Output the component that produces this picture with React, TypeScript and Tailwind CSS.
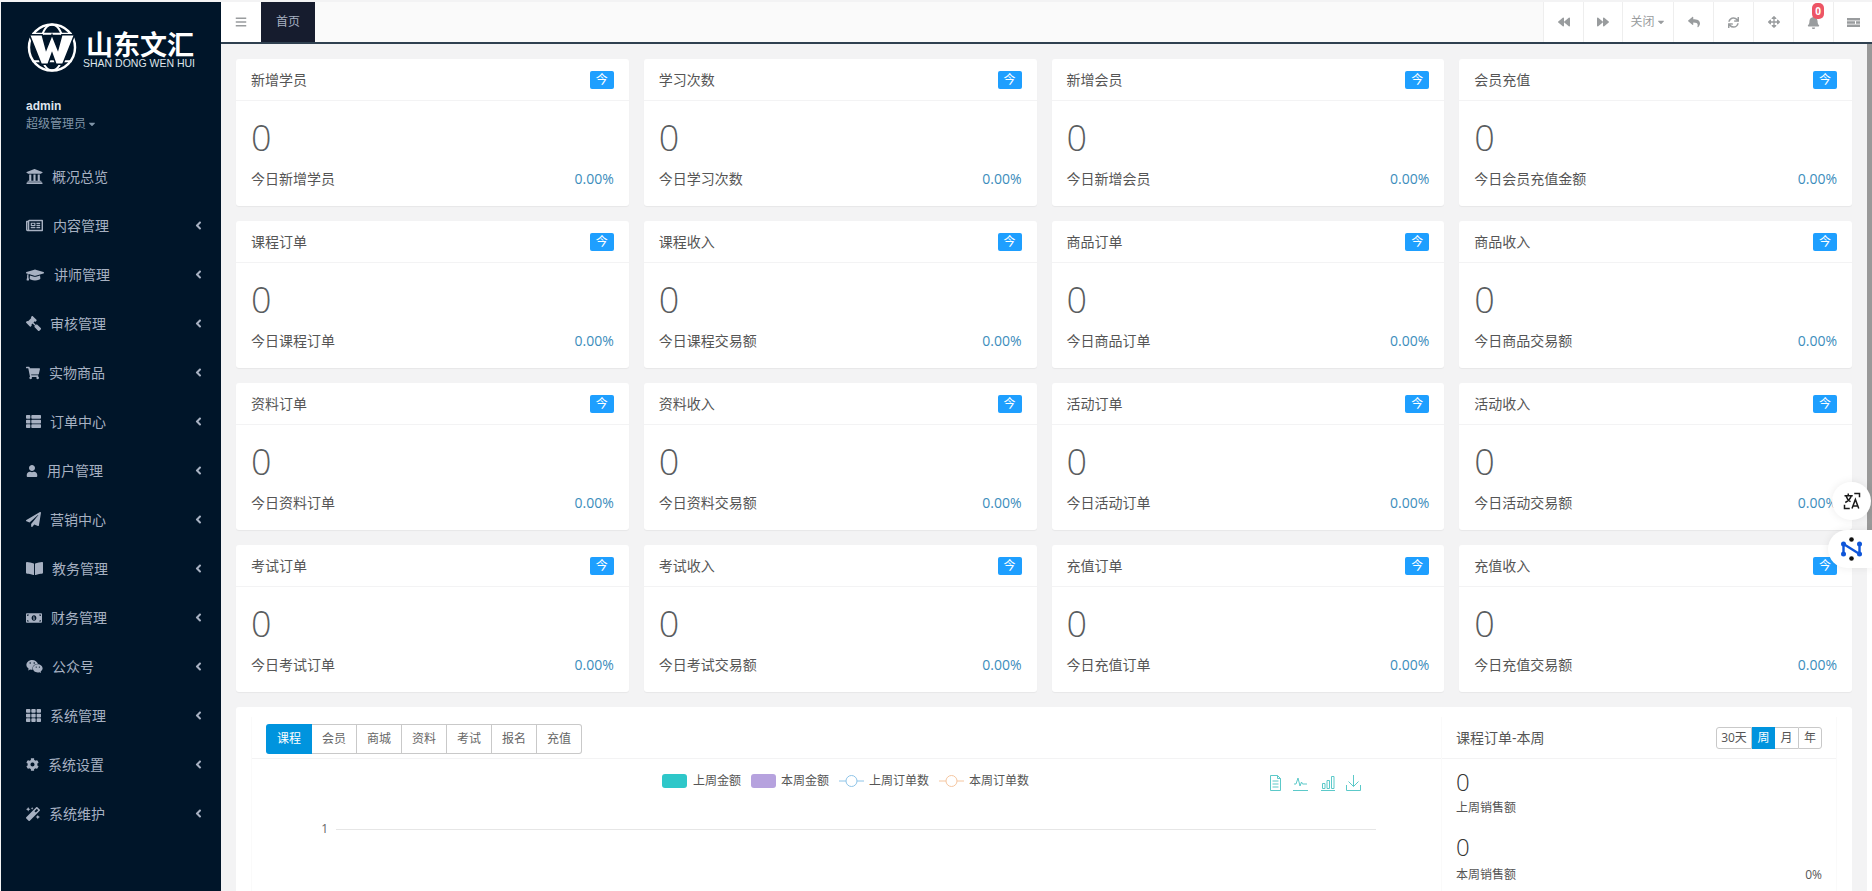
import React from 'react'
import {
  FaAngleLeft,
  FaArrowsAlt,
  FaBackward,
  FaBars,
  FaBell,
  FaBookOpen,
  FaCaretDown,
  FaCog,
  FaForward,
  FaGavel,
  FaGraduationCap,
  FaMagic,
  FaMoneyBillAlt,
  FaPaperPlane,
  FaRegNewspaper,
  FaReply,
  FaShoppingCart,
  FaSync,
  FaTh,
  FaThList,
  FaUniversity,
  FaUser,
  FaWeixin,
} from 'react-icons/fa'

const font = "font-['Open_Sans','Noto_Sans_CJK_SC',sans-serif]"

const menu = [
  { icon: FaUniversity, label: '概况总览', slot: 'w-[26px]', size: 17, arrow: false, flip: false },
  { icon: FaRegNewspaper, label: '内容管理', slot: 'w-[27px]', size: 17, arrow: true, flip: false },
  { icon: FaGraduationCap, label: '讲师管理', slot: 'w-[28px]', size: 18, arrow: true, flip: false },
  { icon: FaGavel, label: '审核管理', slot: 'w-[24px]', size: 15, arrow: true, flip: true },
  { icon: FaShoppingCart, label: '实物商品', slot: 'w-[23px]', size: 14, arrow: true, flip: false },
  { icon: FaThList, label: '订单中心', slot: 'w-[24px]', size: 15, arrow: true, flip: false },
  { icon: FaUser, label: '用户管理', slot: 'w-[21px]', size: 12, arrow: true, flip: false },
  { icon: FaPaperPlane, label: '营销中心', slot: 'w-[24px]', size: 15, arrow: true, flip: false },
  { icon: FaBookOpen, label: '教务管理', slot: 'w-[26px]', size: 17, arrow: true, flip: false },
  { icon: FaMoneyBillAlt, label: '财务管理', slot: 'w-[25px]', size: 16, arrow: true, flip: false },
  { icon: FaWeixin, label: '公众号', slot: 'w-[26px]', size: 17, arrow: true, flip: false },
  { icon: FaTh, label: '系统管理', slot: 'w-[24px]', size: 15, arrow: true, flip: false },
  { icon: FaCog, label: '系统设置', slot: 'w-[22px]', size: 13, arrow: true, flip: false },
  { icon: FaMagic, label: '系统维护', slot: 'w-[23px]', size: 14, arrow: true, flip: false },
]

const stats = [
  ['新增学员', '今日新增学员'],
  ['学习次数', '今日学习次数'],
  ['新增会员', '今日新增会员'],
  ['会员充值', '今日会员充值金额'],
  ['课程订单', '今日课程订单'],
  ['课程收入', '今日课程交易额'],
  ['商品订单', '今日商品订单'],
  ['商品收入', '今日商品交易额'],
  ['资料订单', '今日资料订单'],
  ['资料收入', '今日资料交易额'],
  ['活动订单', '今日活动订单'],
  ['活动收入', '今日活动交易额'],
  ['考试订单', '今日考试订单'],
  ['考试收入', '今日考试交易额'],
  ['充值订单', '今日充值订单'],
  ['充值收入', '今日充值交易额'],
]

const tabs = ['课程', '会员', '商城', '资料', '考试', '报名', '充值']

const Logo = () => (
  <svg width="50" height="49" viewBox="0 0 50 50" fill="none" className="shrink-0">
    <circle cx="25" cy="25" r="23.5" stroke="#fff" strokeWidth="2.500" />
    <ellipse cx="25" cy="25" rx="12" ry="23.500" stroke="#fff" strokeWidth="2" />
    <path d="M5 11h40M5 39h40" stroke="#fff" strokeWidth="2" />
    <path d="M2 12h13l4 15 6-15 6 15 4-15h13L36 42h-7l-4-11-4 11h-7z" fill="#fff" stroke="#001529" strokeWidth="1.500" />
  </svg>
)

const Sidebar = () => (
  <aside className="w-[220px] shrink-0 ml-px bg-[#001529] flex flex-col">
    <div className="h-[84px] pt-[21px] pl-[26px] flex items-start">
      <Logo />
      <div className="ml-[6px] flex flex-col">
        <span className="mt-[7px] ml-[3px] text-[27px] leading-[28px] text-white font-['Noto_Sans_CJK_SC',sans-serif] font-bold whitespace-nowrap">山东文汇</span>
        <span className="text-[10.500px] leading-[10px] text-[#dfe4ea] font-['Liberation_Sans',sans-serif] whitespace-nowrap">SHAN DONG WEN HUI</span>
      </div>
    </div>
    <div className="pl-[25px] pt-[12px] h-[61px]">
      <div className="text-[12px] leading-[16px] font-bold text-[#dfe4ed] font-['Liberation_Sans',sans-serif]">admin</div>
      <div className="text-[12px] leading-[18px] text-[#8095a8] mt-[1px] flex items-center">
        超级管理员
        <FaCaretDown size={10} className="ml-[1px]" />
      </div>
    </div>
    <nav className="flex flex-col mt-[5px]">
      {menu.map((m) => (
        <div key={m.label} className="h-[49px] pl-[25px] pr-[16px] flex items-center text-[#a7b1c2] text-[14px]">
          <span className={`${m.slot} shrink-0`}>
            <m.icon size={m.size} className={m.flip ? '-scale-x-100' : ''} />
          </span>
          <span>{m.label}</span>
          {m.arrow && <FaAngleLeft size={13} className="ml-auto" />}
        </div>
      ))}
    </nav>
  </aside>
)

const ToolBtn = ({ children, className = 'w-[40px]' }: { children: React.ReactNode; className?: string }) => (
  <div className={`${className} h-full border-l border-[#eeeeee] flex items-center justify-center text-[#999c9e] bg-white relative`}>
    {children}
  </div>
)

const Header = () => (
  <header className="h-[42px] shrink-0 bg-[#fafafa] border-b-2 border-[#2f4050] flex items-stretch">
    <div className="w-[40px] bg-white flex items-center justify-center text-[#999c9e]">
      <FaBars size={12} />
    </div>
    <div className="w-[54px] bg-[#161c2e] text-[#a7b1c2] text-[12px] flex items-center justify-center">首页</div>
    <div className="ml-auto flex items-stretch text-[12px]">
      <ToolBtn><FaBackward size={12} /></ToolBtn>
      <ToolBtn className="w-[39px]"><FaForward size={12} /></ToolBtn>
      <ToolBtn className="w-[51px]">
        关闭
        <FaCaretDown size={10} className="ml-[1px]" />
      </ToolBtn>
      <ToolBtn><FaReply size={12} /></ToolBtn>
      <ToolBtn><FaSync size={11} /></ToolBtn>
      <ToolBtn><FaArrowsAlt size={12} /></ToolBtn>
      <ToolBtn>
        <FaBell size={13} />
        <span className="absolute top-[1px] left-[18px] w-[12px] h-[16px] rounded-[5px] bg-[#ed5565] text-white text-[10px] font-bold leading-[16px] text-center">0</span>
      </ToolBtn>
      <ToolBtn className="w-[39px]">
        <svg width="13" height="9" viewBox="0 0 13 9" fill="#999c9e">
          <path d="M0 0h13v2.500H0zM0 3.200h8v2.500H0zM9 3.200h4v2.500H9zM0 6.500h13V9H0z" />
        </svg>
      </ToolBtn>
    </div>
  </header>
)

const StatCard = ({ title, sub }: { title: string; sub: string }) => (
  <div className="h-[147px] bg-white rounded-[3px] shadow-[0_1px_1px_rgba(0,0,0,0.05)] flex flex-col">
    <div className="h-[42px] border-b border-[#f3f3f4] px-[15px] flex items-center justify-between text-[14px] text-[#555555]">
      <span>{title}</span>
      <span className="w-[24px] h-[18px] rounded-[2px] bg-[#1e9fff] text-white text-[12px] leading-[18px] text-center">今</span>
    </div>
    <div className="px-[15px] pt-[13px]">
      <div className="text-[36px] leading-[48px] font-light text-[#5a5d5f]">0</div>
      <div className="mt-[8px] flex justify-between text-[14px] leading-[18px] text-[#555555]">
        <span>{sub}</span>
        <span className="text-[#3c8dbc]">0.00%</span>
      </div>
    </div>
  </div>
)

const LineIcons = () => (
  <div className="flex items-start text-[#5cc9c9] mt-[1px]">
    <svg width="11" height="16" viewBox="0 0 11 16" fill="none" stroke="currentColor">
      <path d="M.5.500h7l3 3v12H.5zM2.500 6h6M2.500 9h6M2.500 12h6M7.500.500v3h3" />
    </svg>
    <svg width="15" height="16" viewBox="0 0 15 16" fill="none" stroke="currentColor" className="ml-[12px]">
      <path d="M1 9h2l2-6 2 8 1.500-4 1 2H14M0 15.500h15" />
    </svg>
    <svg width="14" height="16" viewBox="0 0 14 16" fill="none" stroke="currentColor" className="ml-[13px]">
      <path d="M0 15.500h14M1.500 8.500h2.500v5H1.500zM6 5.500h2.500v8H6zM10.500 1.500H13v12h-2.500z" />
    </svg>
    <svg width="15" height="16" viewBox="0 0 15 16" fill="none" stroke="currentColor" className="ml-[11px]">
      <path d="M7.500 0v11.500M2.500 6.500l5 5 5-5M.5 10v5.500h14V10" />
    </svg>
  </div>
)

const LegendLine = ({ className }: { className: string }) => (
  <svg width="25" height="14" viewBox="0 0 25 14" fill="none" stroke="currentColor" className={className}>
    <path d="M0 7h7M18 7h7" />
    <circle cx="12.500" cy="7" r="5.500" />
  </svg>
)

const ChartPanel = () => (
  <section className="mt-[15px] h-[300px] bg-white rounded-[3px] flex px-[15px] pt-[10px]">
    <div className="flex-1 min-w-0 flex flex-col border-l border-[#fafafa]">
      <div className="h-[42px] shrink-0 border-b border-[#f3f3f4] pl-[14px] pt-[7px]">
        <div className="flex w-fit text-[12px] text-[#666666]">
          {tabs.map((t, i) => (
            <div
              key={t}
              className={
                i === 0
                  ? 'w-[46px] h-[30px] bg-[#0094de] text-white rounded-l-[3px] flex items-center justify-center'
                  : 'w-[45px] h-[30px] border border-l-0 border-[#c9c9c9] flex items-center justify-center last:rounded-r-[3px]'
              }
            >
              {t}
            </div>
          ))}
        </div>
      </div>
      <div className="h-[33px] shrink-0 flex items-start pt-[15px] pl-[410px] pr-[80px]">
        <div className="flex items-center h-[14px] text-[12px] text-[#555555]">
          <span className="w-[25px] h-[14px] rounded-[3px] bg-[#2ec7c9]" />
          <span className="ml-[6px] mr-[10px]">上周金额</span>
          <span className="w-[25px] h-[14px] rounded-[3px] bg-[#b6a2de]" />
          <span className="ml-[5px] mr-[10px]">本周金额</span>
          <LegendLine className="text-[#8ec4e8]" />
          <span className="ml-[5px] mr-[10px]">上周订单数</span>
          <LegendLine className="text-[#f5c6a0]" />
          <span className="ml-[5px]">本周订单数</span>
        </div>
        <div className="ml-auto"><LineIcons /></div>
      </div>
      <div className="mt-[29px] h-[16px] flex items-center text-[12px] text-[#666666]">
        <span className="w-[76px] text-right">1</span>
        <div className="ml-[8px] w-[1040px] h-px bg-[#e6e6e6]" />
      </div>
    </div>
    <div className="w-[396px] shrink-0 flex flex-col border-x border-[#fafafa] text-[#555555]">
      <div className="h-[42px] shrink-0 border-b border-[#f3f3f4] px-[14px] flex items-center justify-between text-[14px]">
        <span>课程订单-本周</span>
        <div className="flex text-[12px] h-[22px]">
          <div className="w-[36px] border border-[#c9c9c9] rounded-l-[3px] flex items-center justify-center">30天</div>
          <div className="w-[23px] bg-[#0094de] text-white flex items-center justify-center">周</div>
          <div className="w-[23px] border-y border-[#c9c9c9] flex items-center justify-center">月</div>
          <div className="w-[24px] border border-[#c9c9c9] rounded-r-[3px] flex items-center justify-center">年</div>
        </div>
      </div>
      <div className="px-[14px] pt-[7px]">
        <div className="text-[24px] leading-[32px] font-light text-[#333333]">0</div>
        <div className="text-[12px] leading-[18px] mt-[1px]">上周销售额</div>
        <div className="text-[24px] leading-[32px] font-light text-[#333333] mt-[14px]">0</div>
        <div className="text-[12px] leading-[18px] mt-[3px] flex justify-between">
          <span>本周销售额</span>
          <span>0%</span>
        </div>
      </div>
    </div>
  </section>
)

const FloatButtons = () => (
  <>
    <div className="absolute right-[1px] top-[482px] w-[39px] h-[38px] rounded-full bg-white shadow-[0_0_8px_rgba(0,0,0,0.08)] flex items-center justify-center">
      <svg width="18" height="18" viewBox="0 0 24 24" fill="none" stroke="#1a1a1a" strokeWidth="2" className="shrink-0">
        <path d="M2 5h11M7 2v3M11 5c-1 4-4 7-8 9M4 5c1 4 3 6 6 8M12 22l4.500-12L21 22M13.500 18.500h6M15 2h7v5M2 17v5h7" />
      </svg>
    </div>
    <div className="absolute right-0 top-[530px] w-[44px] h-[38px] rounded-l-full bg-white shadow-[0_0_8px_rgba(0,0,0,0.08)] flex items-center pl-[13px]">
      <svg width="21" height="24" viewBox="0 0 21 24" fill="none" className="shrink-0">
        <path d="M2.500 7v10M2.500 7l16 10M18.500 7v10" stroke="#0f56d9" strokeWidth="2.400" />
        <circle cx="2.500" cy="7" r="2.500" fill="#0f56d9" />
        <circle cx="18.500" cy="7" r="2.500" fill="#0f56d9" />
        <circle cx="2.500" cy="17" r="2.500" fill="#0f56d9" />
        <circle cx="18.500" cy="17" r="2.500" fill="#0f56d9" />
        <circle cx="10.500" cy="2.500" r="2.300" fill="#111" />
        <circle cx="10.500" cy="21.500" r="2.300" fill="#111" />
      </svg>
    </div>
  </>
)

const App = () => (
  <div className={`${font} relative h-screen overflow-hidden flex bg-[#f3f3f4] pt-[2px]`}>
    <Sidebar />
    <main className="flex-1 min-w-0 flex flex-col">
      <Header />
      <div className="flex-1 flex min-h-0">
        <div className="flex-1 min-w-0 pt-[15px] pl-[15px] pr-[15px]">
          <div className="grid grid-cols-4 gap-x-[15px] gap-y-[15px]">
            {stats.map(([title, sub]) => (
              <StatCard key={title} title={title} sub={sub} />
            ))}
          </div>
          <ChartPanel />
        </div>
        <div className="w-[5px] shrink-0 flex flex-col bg-white">
          <div className="h-[500px] bg-[#999999]" />
        </div>
      </div>
    </main>
    <FloatButtons />
  </div>
)

export default App
